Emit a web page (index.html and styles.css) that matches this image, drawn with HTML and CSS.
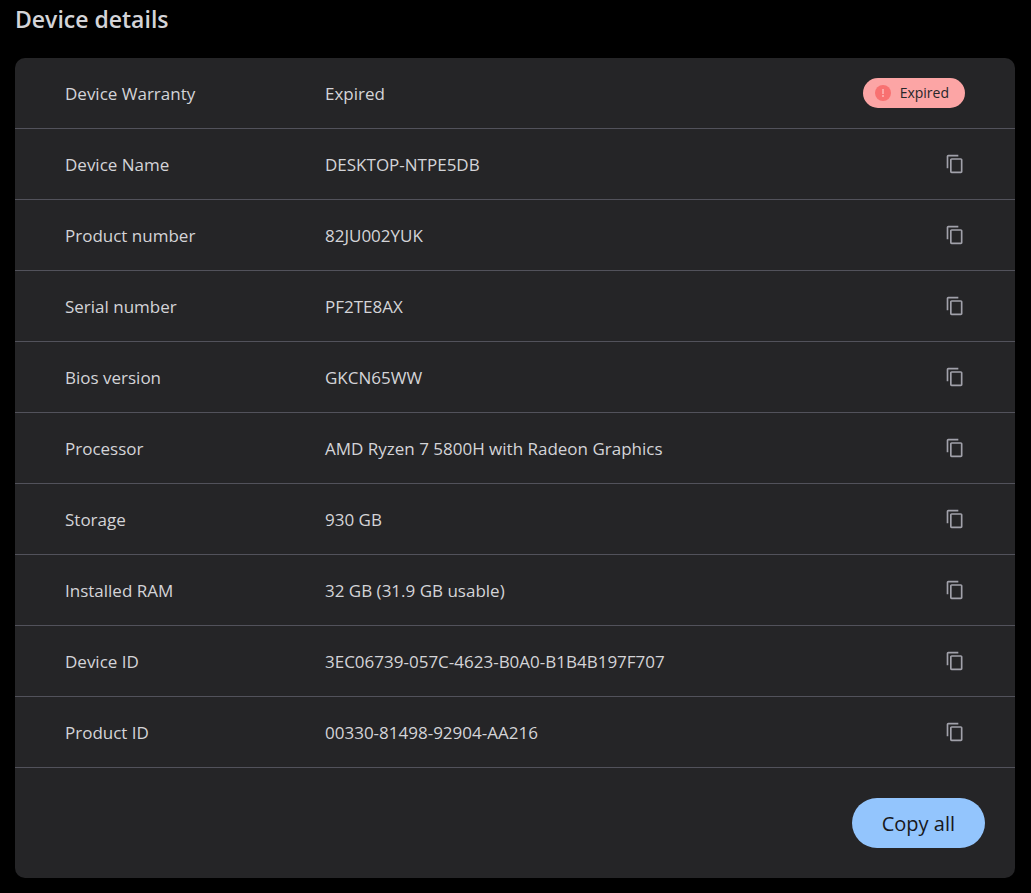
FILE: index.html
```
<!DOCTYPE html>
<html lang="en">
<head>
    <meta charset="UTF-8">
    <meta name="viewport" content="width=device-width, initial-scale=1.0">
    <title>Device details</title>
    <link rel="stylesheet" href="styles.css">
</head>
<body>
    <svg class="sprite" aria-hidden="true">
        <symbol id="icon-copy" viewBox="0 0 24 24">
            <path d="M16 1H4c-1.100 0-2 .9-2 2v14h2V3h12V1zm3 4H8c-1.100 0-2 .9-2 2v14c0 1.100.9 2 2 2h11c1.100 0 2-.9 2-2V7c0-1.100-.9-2-2-2zm0 16H8V7h11v14z"/>
        </symbol>
    </svg>

    <h1>Device details</h1>
    <div class="card">
        <table>
            <tbody>
                <tr>
                    <th scope="row">Device Warranty</th>
                    <td>Expired</td>
                    <td class="action">
                        <span class="badge">
                            <svg viewBox="0 0 16 16" aria-hidden="true">
                                <circle cx="8" cy="8" r="8"/>
                                <path d="M7 4h2v5H7zM7 10h2v2H7z"/>
                            </svg>
                            Expired
                        </span>
                    </td>
                </tr>
                <tr>
                    <th scope="row">Device Name</th>
                    <td>DESKTOP-NTPE5DB</td>
                    <td class="action"><button type="button" class="copy" aria-label="Copy device name"><svg><use href="#icon-copy"/></svg></button></td>
                </tr>
                <tr>
                    <th scope="row">Product number</th>
                    <td>82JU002YUK</td>
                    <td class="action"><button type="button" class="copy" aria-label="Copy product number"><svg><use href="#icon-copy"/></svg></button></td>
                </tr>
                <tr>
                    <th scope="row">Serial number</th>
                    <td>PF2TE8AX</td>
                    <td class="action"><button type="button" class="copy" aria-label="Copy serial number"><svg><use href="#icon-copy"/></svg></button></td>
                </tr>
                <tr>
                    <th scope="row">Bios version</th>
                    <td>GKCN65WW</td>
                    <td class="action"><button type="button" class="copy" aria-label="Copy bios version"><svg><use href="#icon-copy"/></svg></button></td>
                </tr>
                <tr>
                    <th scope="row">Processor</th>
                    <td>AMD Ryzen 7 5800H with Radeon Graphics</td>
                    <td class="action"><button type="button" class="copy" aria-label="Copy processor"><svg><use href="#icon-copy"/></svg></button></td>
                </tr>
                <tr>
                    <th scope="row">Storage</th>
                    <td>930 GB</td>
                    <td class="action"><button type="button" class="copy" aria-label="Copy storage"><svg><use href="#icon-copy"/></svg></button></td>
                </tr>
                <tr>
                    <th scope="row">Installed RAM</th>
                    <td>32 GB (31.9 GB usable)</td>
                    <td class="action"><button type="button" class="copy" aria-label="Copy installed RAM"><svg><use href="#icon-copy"/></svg></button></td>
                </tr>
                <tr>
                    <th scope="row">Device ID</th>
                    <td>3EC06739-057C-4623-B0A0-B1B4B197F707</td>
                    <td class="action"><button type="button" class="copy" aria-label="Copy device ID"><svg><use href="#icon-copy"/></svg></button></td>
                </tr>
                <tr>
                    <th scope="row">Product ID</th>
                    <td>00330-81498-92904-AA216</td>
                    <td class="action"><button type="button" class="copy" aria-label="Copy product ID"><svg><use href="#icon-copy"/></svg></button></td>
                </tr>
            </tbody>
        </table>
        <div class="card-footer">
            <button type="button" class="copy-all">Copy all</button>
        </div>
    </div>
</body>
</html>
```
FILE: styles.css
```
* {
    box-sizing: border-box;
}
body {
    margin: 0;
    padding: 4px 16px 15px 15px;
    background-color: #000;
    color: #d4d4d8;
    font-family: 'Segoe UI', 'Open Sans', 'Noto Sans', sans-serif;
    font-size: 17px;
    line-height: 24px;
}
.sprite {
    display: none;
}
h1 {
    margin: 0 0 24px;
    font-size: 23px;
    font-weight: 600;
    line-height: 30px;
}
.card {
    background-color: #252527;
    border-radius: 10px;
}
table {
    width: 100%;
    border-collapse: separate;
    border-spacing: 0;
}
th, td {
    height: 71px;
    padding: 2px 0 0;
    border-bottom: 1px solid #52525b;
    font-weight: 400;
    text-align: left;
    vertical-align: middle;
}
th {
    width: 310px;
    padding-left: 50px;
}
.action {
    width: 160px;
    padding: 0 50px 0 0;
}
.badge {
    display: flex;
    align-items: center;
    gap: 9px;
    width: fit-content;
    height: 30px;
    margin-left: auto;
    padding: 0 16px 0 12px;
    border-radius: 15px;
    background-color: #fca5a5;
    color: #27272a;
    font-size: 14px;
}
.badge svg {
    width: 16px;
    height: 16px;
}
.badge circle {
    fill: #f87171;
}
.badge path {
    fill: #fca5a5;
}
.copy {
    display: block;
    margin-left: auto;
    padding: 0;
    border: none;
    background: none;
    color: #a1a1aa;
    cursor: pointer;
}
.copy svg {
    display: block;
    width: 20px;
    height: 20px;
    fill: currentColor;
}
.card-footer {
    display: flex;
    justify-content: flex-end;
    padding: 30px;
}
.copy-all {
    height: 50px;
    padding: 0 30px;
    border: none;
    border-radius: 25px;
    background-color: #93c5fd;
    color: #18181b;
    font-family: inherit;
    font-size: 20px;
    font-weight: 500;
    cursor: pointer;
}
.copy-all:hover {
    background-color: #bfdbfe;
}
```
